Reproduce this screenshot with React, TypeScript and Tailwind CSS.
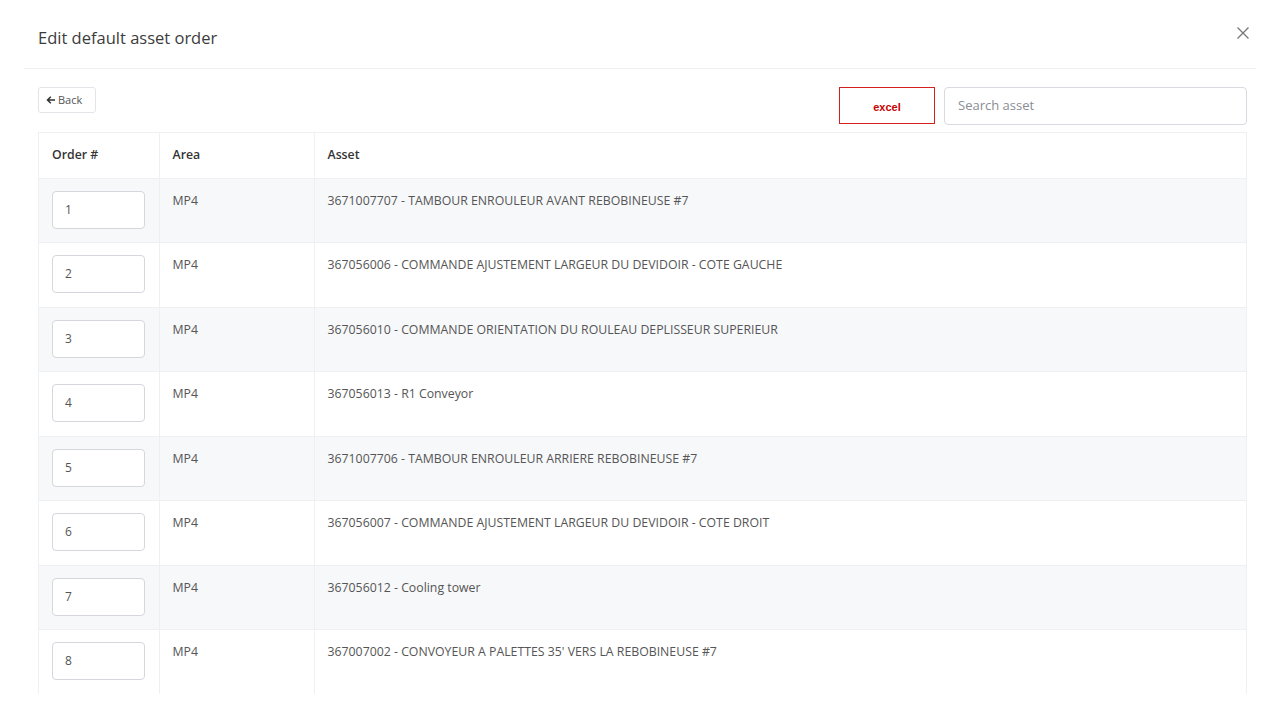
import React from "react";

const rows = [
  "3671007707 - TAMBOUR ENROULEUR AVANT REBOBINEUSE #7",
  "367056006 - COMMANDE AJUSTEMENT LARGEUR DU DEVIDOIR - COTE GAUCHE",
  "367056010 - COMMANDE ORIENTATION DU ROULEAU DEPLISSEUR SUPERIEUR",
  "367056013 - R1 Conveyor",
  "3671007706 - TAMBOUR ENROULEUR ARRIERE REBOBINEUSE #7",
  "367056007 - COMMANDE AJUSTEMENT LARGEUR DU DEVIDOIR - COTE DROIT",
  "367056012 - Cooling tower",
  "367007002 - CONVOYEUR A PALETTES 35' VERS LA REBOBINEUSE #7",
];

export default function App() {
  return (
    <div className="w-[1280px] h-[708px] bg-white overflow-hidden font-['Open_Sans',sans-serif] text-[#4b4b4b]">
      <div className="mx-6 h-[69px] border-b border-[#eef0f3] flex items-center justify-between pl-[14px] pr-[6px]">
        <div className="text-[16.5px] text-[#3c3c3c] font-medium pt-[8px]">Edit default asset order</div>
        <svg width="14" height="14" viewBox="0 0 14 14" className="mb-[2px]">
          <path d="M1.5 1.5 L12.5 12.5 M12.5 1.5 L1.5 12.5" stroke="#777" strokeWidth="1.3" fill="none" />
        </svg>
      </div>
      <div className="pl-[38px] pr-[33px] pt-[18px]">
        <div className="flex justify-between items-start h-[37px]">
          <button className="h-[26px] w-[58px] px-[7px] border border-[#e2e4e8] rounded-[3px] text-[11px] text-[#555] flex items-center gap-[2px] bg-white">
            <svg width="10" height="10" viewBox="0 0 10 10">
              <path d="M9 5 H1.8 M4.8 1.8 L1.5 5 L4.8 8.2" stroke="#333" strokeWidth="1.5" fill="none" />
            </svg>
            Back
          </button>
          <div className="flex items-start gap-[9px]">
            <button className="w-[96px] h-[37px] border border-[#d42020] text-[#c80000] font-bold text-[11px] font-['Liberation_Sans',sans-serif] flex items-center justify-center pt-[3px] bg-white">
              excel
            </button>
            <div className="w-[303px] h-[38px] border border-[#d8dadf] rounded-[4px] flex items-center px-[13px] text-[13px] text-[#8a8d93]">
              Search asset
            </div>
          </div>
        </div>
        <div className="mt-[8px] h-[562px] overflow-hidden border-r border-l border-t border-[#eef0f4]">
          <table className="w-full border-collapse text-[12.3px]">
            <thead>
              <tr className="h-[45px] bg-white">
                <th className="w-[120px] text-left font-semibold text-[#333] pl-[13px] border-r border-[#eef0f4]">Order #</th>
                <th className="w-[155px] text-left font-semibold text-[#333] pl-[13px] border-r border-[#eef0f4]">Area</th>
                <th className="text-left font-semibold text-[#333] pl-[13px]">Asset</th>
              </tr>
            </thead>
            <tbody>
              {rows.map((r, i) => (
                <tr key={i} className={`h-[64.5px] border-t border-[#eef0f4] ${i % 2 === 0 ? "bg-[#f7f8fa]" : "bg-white"}`}>
                  <td className="align-top pl-[13px] pt-[12px] border-r border-[#eef0f4]">
                    <div className="w-[93px] h-[38px] border border-[#d5d7dc] rounded-[4px] bg-white flex items-center px-[12px] text-[12px] text-[#555]">
                      {i + 1}
                    </div>
                  </td>
                  <td className="align-top pl-[13px] pt-[13px] text-[#555] border-r border-[#eef0f4]">MP4</td>
                  <td className="align-top pl-[13px] pt-[13px] text-[#555]">{r}</td>
                </tr>
              ))}
            </tbody>
          </table>
        </div>
      </div>
    </div>
  );
}
